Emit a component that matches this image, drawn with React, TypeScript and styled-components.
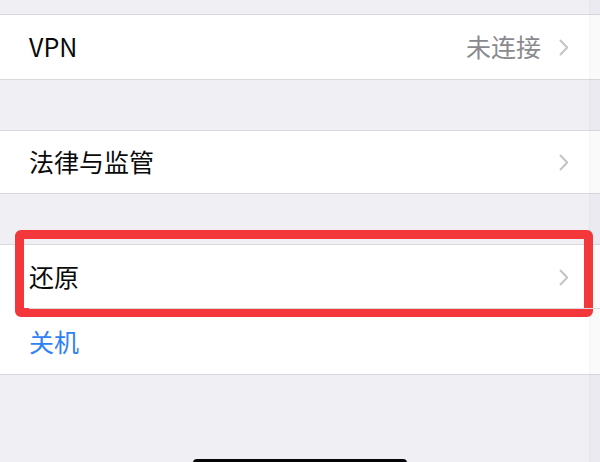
import React from "react";
import styled, { createGlobalStyle } from "styled-components";

const GlobalStyle = createGlobalStyle`
  html, body {
    margin: 0;
    padding: 0;
    background: #efeff4;
  }
  body {
    font-family: "Noto Sans CJK SC", "Noto Sans", sans-serif;
    -webkit-font-smoothing: antialiased;
  }
`;

const Screen = styled.div`
  position: relative;
  width: 600px;
  height: 462px;
  overflow: hidden;
  background: #efeff4;
  display: flex;
  flex-direction: column;
`;

const Gap = styled.div<{ $h: number }>`
  height: ${(p) => p.$h}px;
  flex-shrink: 0;
`;

const Group = styled.div`
  position: relative;
  background: #fff;
  border-top: 1px solid #d9d9dd;
  border-bottom: 1px solid #d9d9dd;
`;

const Row = styled.div<{ $h?: number; $divider?: boolean }>`
  position: relative;
  height: ${(p) => p.$h ?? 64}px;
  display: flex;
  align-items: center;
  padding: 0 31px 0 29px;
  box-sizing: border-box;

  ${(p) =>
    p.$divider &&
    `
    &::after {
      content: "";
      position: absolute;
      left: 29px;
      right: 0;
      bottom: 0;
      height: 1px;
      background: #dcdce0;
    }
  `}
`;

const Label = styled.span<{ $tint?: string }>`
  flex: 1;
  font-size: 25px;
  line-height: 1;
  color: ${(p) => p.$tint ?? "#0a0a0a"};
  margin-top: -1px;
`;

const Detail = styled.span`
  font-size: 25px;
  line-height: 1;
  color: #8a8a8e;
  margin-right: 18px;
  margin-top: -1px;
`;

const Chevron = styled.svg`
  width: 10px;
  height: 17px;
  flex-shrink: 0;
`;

const Highlight = styled.div`
  position: absolute;
  left: 15px;
  top: -15px;
  width: 578px;
  height: 87px;
  box-sizing: border-box;
  border: 9px solid #f4373a;
  border-radius: 6px;
  pointer-events: none;
`;

const EdgeShade = styled.div`
  position: absolute;
  top: 0;
  right: 0;
  width: 10px;
  height: 100%;
  background: rgba(110, 110, 130, 0.035);
  border-left: 1px solid rgba(0, 0, 0, 0.025);
`;

const HomeBar = styled.div`
  position: absolute;
  left: 193px;
  top: 459px;
  width: 214px;
  height: 8px;
  border-radius: 4px;
  background: #050505;
`;

const Arrow = () => (
  <Chevron viewBox="0 0 10 17">
    <path
      d="M1.5 1.5 L8.2 8.5 L1.5 15.5"
      fill="none"
      stroke="#c4c4c8"
      strokeWidth="2"
      strokeLinecap="round"
      strokeLinejoin="round"
    />
  </Chevron>
);

export default function App() {
  return (
    <>
      <GlobalStyle />
      <Screen>
        <Gap $h={14} />
        <Group>
          <Row>
            <Label>VPN</Label>
            <Detail>未连接</Detail>
            <Arrow />
          </Row>
        </Group>
        <Gap $h={50} />
        <Group>
          <Row $h={62}>
            <Label>法律与监管</Label>
            <Arrow />
          </Row>
        </Group>
        <Gap $h={50} />
        <Group>
          <Row $divider>
            <Label>还原</Label>
            <Arrow />
            <Highlight />
          </Row>
          <Row $h={65}>
            <Label $tint="#2f7ff5">关机</Label>
          </Row>
        </Group>
        <EdgeShade />
        <HomeBar />
      </Screen>
    </>
  );
}
